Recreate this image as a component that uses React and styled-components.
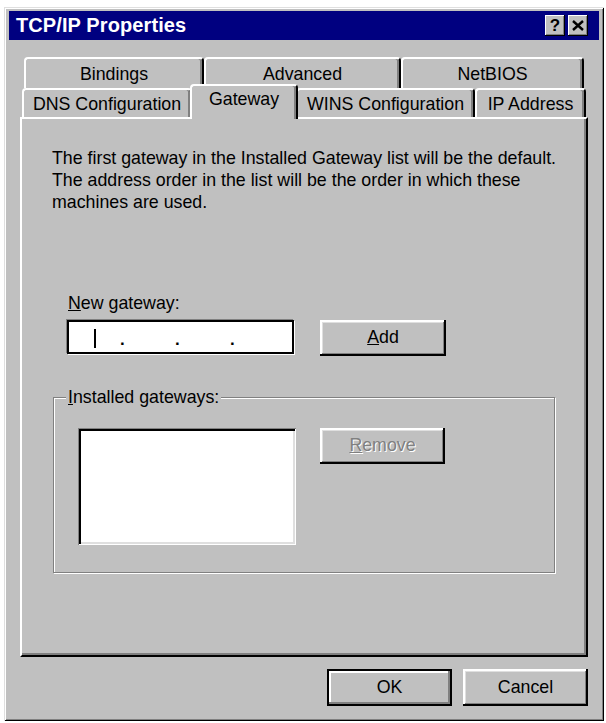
import React from 'react';
import styled, { createGlobalStyle, css } from 'styled-components';

const Global = createGlobalStyle`
  html, body { margin: 0; padding: 0; background: #fff; }
  body {
    font-family: "Liberation Sans", Arial, sans-serif;
    font-size: 17.8px;
    color: #000;
  }
`;

const Window = styled.div`
  box-sizing: border-box;
  width: 600px;
  height: 714px;
  margin: 7px 0 0 4px;
  padding: 4px 5px 5px;
  background: #c0c0c0;
  box-shadow: inset 1px 1px #dfdfdf, inset -1px -1px #000, inset 2px 2px #fff,
    inset -2px -2px #808080;
  display: flex;
  flex-direction: column;
`;

const TitleBar = styled.div`
  height: 29px;
  flex: none;
  background: #000080;
  display: flex;
  align-items: center;
  padding: 0 11px 0 7px;
`;

const TitleText = styled.div`
  flex: 1;
  color: #fff;
  font-weight: bold;
  font-size: 20px;
  letter-spacing: 0.1px;
`;

const CaptionButtons = styled.div`
  display: flex;
  gap: 3px;
`;

const CaptionButton = styled.div`
  box-sizing: border-box;
  width: 20px;
  height: 21px;
  background: #c0c0c0;
  box-shadow: inset -1px -1px #000, inset 1px 1px #fff, inset -2px -2px #808080;
  display: flex;
  align-items: center;
  justify-content: center;
  font-weight: bold;
  font-size: 17px;
  line-height: 1;
`;

const TabArea = styled.div`
  margin-top: 17px;
  display: flex;
  flex-direction: column;
`;

const TabRow = styled.div`
  height: ${p => p.$h}px;
  display: flex;
  margin-left: ${p => p.$indent}px;
`;

const Tab = styled.div`
  box-sizing: border-box;
  width: ${p => p.$w}px;
  height: 100%;
  background: #c0c0c0;
  border-top: 2px solid #fff;
  border-left: 2px solid #fff;
  border-right: 2px solid #000;
  box-shadow: inset -2px 0 #808080;
  border-radius: 4px 4px 0 0;
  display: flex;
  align-items: center;
  justify-content: center;
  padding-top: 1px;
  white-space: nowrap;
  ${p =>
    p.$active &&
    css`
      width: ${p.$w + 4}px;
      height: calc(100% + 6px);
      margin: -4px -2px -2px;
      padding-top: 0;
      padding-bottom: 6px;
      position: relative;
      z-index: 1;
    `}
`;

const Panel = styled.div`
  box-sizing: border-box;
  height: 540px;
  margin: 0 11px;
  flex: none;
  border-top: 2px solid #fff;
  border-left: 2px solid #fff;
  border-right: 2px solid #000;
  border-bottom: 2px solid #000;
  box-shadow: inset -2px -2px #808080;
  padding-top: 28px;
  display: flex;
  flex-direction: column;
  align-items: flex-start;
`;

const Description = styled.p`
  margin: 0 0 0 30px;
  line-height: 22px;
  white-space: nowrap;
`;

const FieldLabel = styled.div`
  margin: 79px 0 0 46px;
  line-height: 22px;
`;

const InputRow = styled.div`
  margin: 6px 0 0 45px;
  display: flex;
  align-items: flex-start;
  gap: 26px;
`;

const IpInput = styled.div`
  box-sizing: border-box;
  width: 227px;
  height: 34px;
  background: #fff;
  border: 2px solid #000;
  box-shadow: 1px 1px #fff, -1px -1px #808080;
  display: flex;
  align-items: center;
`;

const IpField = styled.div`
  width: 51px;
  height: 100%;
  display: flex;
  align-items: center;
  justify-content: center;
`;

const Caret = styled.div`
  width: 2px;
  height: 19px;
  background: #000;
  margin-top: 3px;
`;

const IpDot = styled.div`
  width: 4px;
  text-align: center;
  font-weight: bold;
  font-size: 17px;
  padding-top: 6px;
`;

const Button = styled.div`
  box-sizing: border-box;
  width: ${p => p.$w || 125}px;
  height: ${p => p.$h || 36}px;
  background: #c0c0c0;
  display: flex;
  align-items: center;
  justify-content: center;
  padding-bottom: 1px;
  box-shadow: inset -2px -2px #000, inset 2px 2px #fff, inset -3px -3px #808080,
    inset 3px 3px #dfdfdf;
  ${p =>
    p.$default &&
    css`
      border: 2px solid #000;
      box-shadow: inset -2px -2px #808080, inset 2px 2px #fff;
    `}
  ${p =>
    p.$disabled &&
    css`
      color: #808080;
      text-shadow: 1px 1px #fff;
    `}
`;

const GroupBox = styled.fieldset`
  box-sizing: border-box;
  width: 502px;
  margin: 30px 0 0 31px;
  padding: 0 0 27px;
  min-width: 0;
  border: 1px solid #808080;
  box-shadow: inset 1px 1px #fff, 1px 1px #fff;
`;

const GroupLegend = styled.legend`
  margin-left: 12px;
  padding: 0 2px;
  line-height: 22px;
  background: #c0c0c0;
`;

const GroupContent = styled.div`
  margin-top: 20px;
  padding-left: 24px;
  display: flex;
  align-items: flex-start;
  gap: 24px;
`;

const ListBox = styled.div`
  box-sizing: border-box;
  width: 218px;
  height: 117px;
  background: #fff;
  box-shadow: inset 1px 1px #808080, inset -1px -1px #fff, inset 3px 3px #000,
    inset -3px -3px #dfdfdf;
`;

const Footer = styled.div`
  margin-top: 12px;
  padding-right: 11px;
  display: flex;
  justify-content: flex-end;
  gap: 11px;
`;

const CloseGlyph = () => (
  <svg width="12" height="11" viewBox="0 0 12 11">
    <path d="M1 1 L11 10 M11 1 L1 10" stroke="#000" strokeWidth="2.4" fill="none" />
  </svg>
);

const backTabs = [
  { label: 'Bindings', w: 180 },
  { label: 'Advanced', w: 197 },
  { label: 'NetBIOS', w: 183 },
];

const frontTabs = [
  { label: 'DNS Configuration', w: 170 },
  { label: 'Gateway', w: 104, active: true },
  { label: 'WINS Configuration', w: 179 },
  { label: 'IP Address', w: 111 },
];

export default function App() {
  return (
    <>
      <Global />
      <Window>
        <TitleBar>
          <TitleText>TCP/IP Properties</TitleText>
          <CaptionButtons>
            <CaptionButton>?</CaptionButton>
            <CaptionButton>
              <CloseGlyph />
            </CaptionButton>
          </CaptionButtons>
        </TitleBar>

        <TabArea>
          <TabRow $h={31} $indent={15}>
            {backTabs.map(t => (
              <Tab key={t.label} $w={t.w}>
                {t.label}
              </Tab>
            ))}
          </TabRow>
          <TabRow $h={29} $indent={13}>
            {frontTabs.map(t => (
              <Tab key={t.label} $w={t.w} $active={t.active}>
                {t.label}
              </Tab>
            ))}
          </TabRow>
        </TabArea>

        <Panel>
          <Description>
            The first gateway in the Installed Gateway list will be the default.
            <br />
            The address order in the list will be the order in which these
            <br />
            machines are used.
          </Description>

          <FieldLabel>
            <u>N</u>ew gateway:
          </FieldLabel>
          <InputRow>
            <IpInput>
              <IpField>
                <Caret />
              </IpField>
              <IpDot>.</IpDot>
              <IpField />
              <IpDot>.</IpDot>
              <IpField />
              <IpDot>.</IpDot>
              <IpField />
            </IpInput>
            <Button $w={126}>
              <span>
                <u>A</u>dd
              </span>
            </Button>
          </InputRow>

          <GroupBox>
            <GroupLegend>
              <u>I</u>nstalled gateways:
            </GroupLegend>
            <GroupContent>
              <ListBox />
              <Button $disabled>
                <span>
                  <u>R</u>emove
                </span>
              </Button>
            </GroupContent>
          </GroupBox>
        </Panel>

        <Footer>
          <Button $default $h={37}>OK</Button>
          <Button $h={37}>Cancel</Button>
        </Footer>
      </Window>
    </>
  );
}
